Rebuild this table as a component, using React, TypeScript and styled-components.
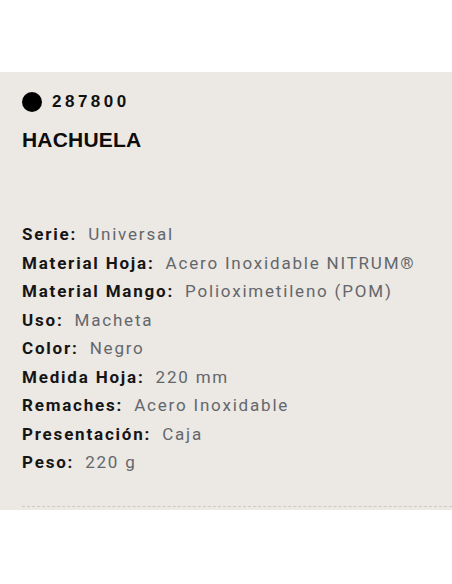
import React from "react";
import styled, { createGlobalStyle } from "styled-components";

const Global = createGlobalStyle`
  html, body { margin: 0; padding: 0; background: #ffffff; }
  body { font-family: Roboto, "Liberation Sans", Arial, sans-serif; }
`;

const Page = styled.div`
  width: 452px;
  height: 584px;
  padding-top: 72px;
  box-sizing: border-box;
`;

const Panel = styled.section`
  background: #ece8e3;
  height: 438px;
  box-sizing: border-box;
  padding: 20px 0 0 22px;
  display: flex;
  flex-direction: column;
  position: relative;
`;

const CodeRow = styled.div`
  display: flex;
  align-items: center;
  gap: 10px;
  height: 20px;
`;

const Dot = styled.span`
  width: 20px;
  height: 20px;
  border-radius: 50%;
  background: #000;
  flex: none;
`;

const Code = styled.span`
  font-family: "Liberation Sans", Arial, sans-serif;
  font-weight: 700;
  font-size: 17px;
  letter-spacing: 3.5px;
  color: #111;
`;

const Title = styled.h1`
  margin: 16px 0 0;
  font-family: "Liberation Sans", Arial, sans-serif;
  font-weight: 700;
  font-size: 21px;
  line-height: 24px;
  color: #0d0d0d;
  letter-spacing: 0.2px;
`;

const Specs = styled.dl`
  margin: 68px 0 0;
  display: flex;
  flex-direction: column;
`;

const Row = styled.div`
  display: flex;
  gap: 11px;
  font-size: 17px;
  line-height: 28.5px;
  letter-spacing: 1.8px;
`;

const Label = styled.dt`
  font-weight: 700;
  color: #151515;
`;

const Value = styled.dd`
  margin: 0;
  color: #63676c;
`;

const Divider = styled.div`
  position: absolute;
  left: 22px;
  right: 0;
  bottom: 3px;
  border-bottom: 1px dashed #cdcac6;
`;

const specs: [string, string][] = [
  ["Serie:", "Universal"],
  ["Material Hoja:", "Acero Inoxidable NITRUM®"],
  ["Material Mango:", "Polioximetileno (POM)"],
  ["Uso:", "Macheta"],
  ["Color:", "Negro"],
  ["Medida Hoja:", "220 mm"],
  ["Remaches:", "Acero Inoxidable"],
  ["Presentación:", "Caja"],
  ["Peso:", "220 g"],
];

export default function App() {
  return (
    <Page>
      <Global />
      <Panel>
        <CodeRow>
          <Dot />
          <Code>287800</Code>
        </CodeRow>
        <Title>HACHUELA</Title>
        <Specs>
          {specs.map(([l, v]) => (
            <Row key={l}>
              <Label>{l}</Label>
              <Value>{v}</Value>
            </Row>
          ))}
        </Specs>
        <Divider />
      </Panel>
    </Page>
  );
}
